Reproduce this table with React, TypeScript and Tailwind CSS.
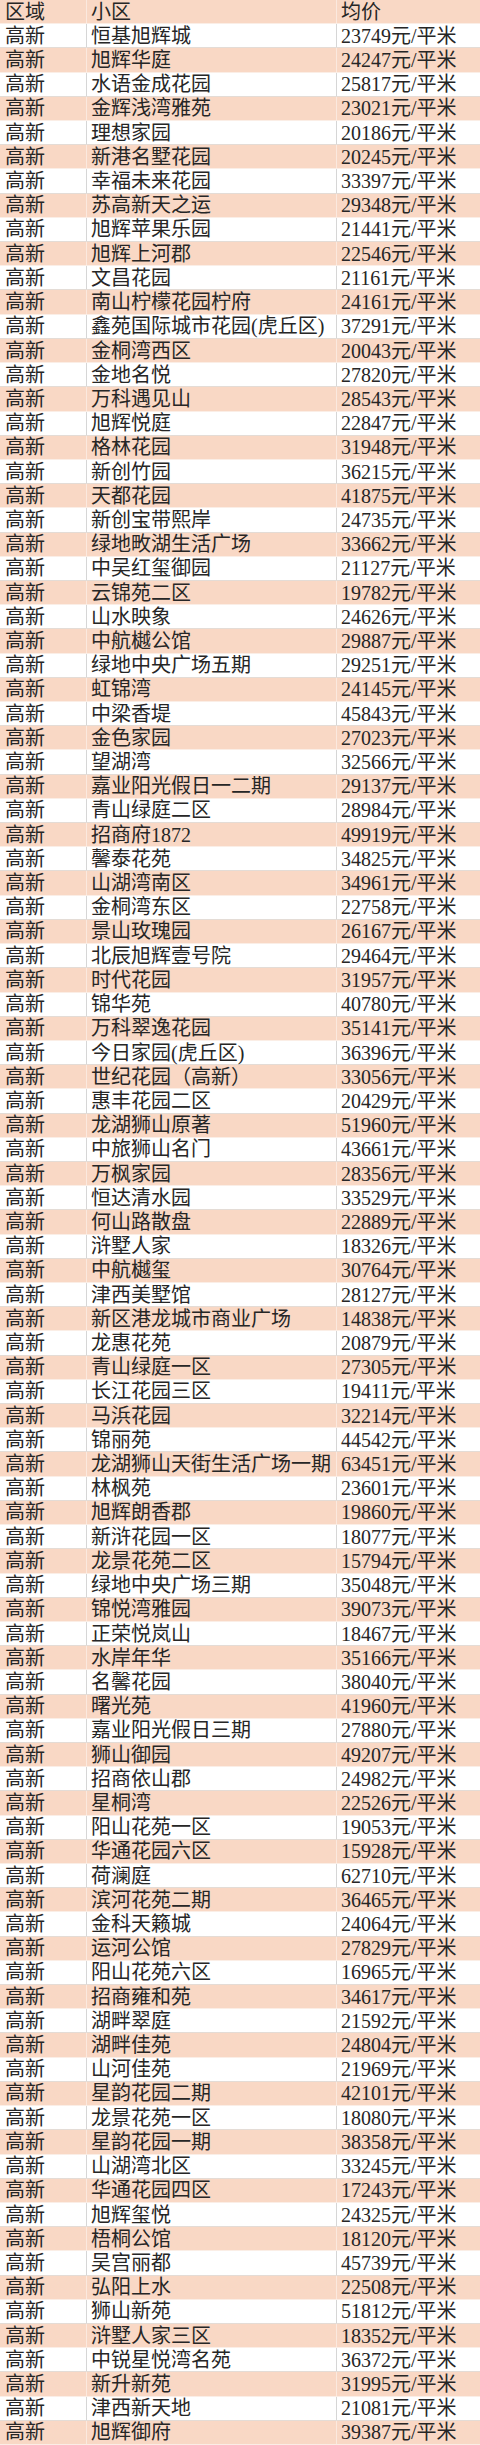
const rows: [string, string][] = [
  ['恒基旭辉城', '23749'],
  ['旭辉华庭', '24247'],
  ['水语金成花园', '25817'],
  ['金辉浅湾雅苑', '23021'],
  ['理想家园', '20186'],
  ['新港名墅花园', '20245'],
  ['幸福未来花园', '33397'],
  ['苏高新天之运', '29348'],
  ['旭辉苹果乐园', '21441'],
  ['旭辉上河郡', '22546'],
  ['文昌花园', '21161'],
  ['南山柠檬花园柠府', '24161'],
  ['鑫苑国际城市花园(虎丘区)', '37291'],
  ['金桐湾西区', '20043'],
  ['金地名悦', '27820'],
  ['万科遇见山', '28543'],
  ['旭辉悦庭', '22847'],
  ['格林花园', '31948'],
  ['新创竹园', '36215'],
  ['天都花园', '41875'],
  ['新创宝带熙岸', '24735'],
  ['绿地畋湖生活广场', '33662'],
  ['中吴红玺御园', '21127'],
  ['云锦苑二区', '19782'],
  ['山水映象', '24626'],
  ['中航樾公馆', '29887'],
  ['绿地中央广场五期', '29251'],
  ['虹锦湾', '24145'],
  ['中梁香堤', '45843'],
  ['金色家园', '27023'],
  ['望湖湾', '32566'],
  ['嘉业阳光假日一二期', '29137'],
  ['青山绿庭二区', '28984'],
  ['招商府1872', '49919'],
  ['馨泰花苑', '34825'],
  ['山湖湾南区', '34961'],
  ['金桐湾东区', '22758'],
  ['景山玫瑰园', '26167'],
  ['北辰旭辉壹号院', '29464'],
  ['时代花园', '31957'],
  ['锦华苑', '40780'],
  ['万科翠逸花园', '35141'],
  ['今日家园(虎丘区)', '36396'],
  ['世纪花园（高新）', '33056'],
  ['惠丰花园二区', '20429'],
  ['龙湖狮山原著', '51960'],
  ['中旅狮山名门', '43661'],
  ['万枫家园', '28356'],
  ['恒达清水园', '33529'],
  ['何山路散盘', '22889'],
  ['浒墅人家', '18326'],
  ['中航樾玺', '30764'],
  ['津西美墅馆', '28127'],
  ['新区港龙城市商业广场', '14838'],
  ['龙惠花苑', '20879'],
  ['青山绿庭一区', '27305'],
  ['长江花园三区', '19411'],
  ['马浜花园', '32214'],
  ['锦丽苑', '44542'],
  ['龙湖狮山天街生活广场一期', '63451'],
  ['林枫苑', '23601'],
  ['旭辉朗香郡', '19860'],
  ['新浒花园一区', '18077'],
  ['龙景花苑二区', '15794'],
  ['绿地中央广场三期', '35048'],
  ['锦悦湾雅园', '39073'],
  ['正荣悦岚山', '18467'],
  ['水岸年华', '35166'],
  ['名馨花园', '38040'],
  ['曙光苑', '41960'],
  ['嘉业阳光假日三期', '27880'],
  ['狮山御园', '49207'],
  ['招商依山郡', '24982'],
  ['星桐湾', '22526'],
  ['阳山花苑一区', '19053'],
  ['华通花园六区', '15928'],
  ['荷澜庭', '62710'],
  ['滨河花苑二期', '36465'],
  ['金科天籁城', '24064'],
  ['运河公馆', '27829'],
  ['阳山花苑六区', '16965'],
  ['招商雍和苑', '34617'],
  ['湖畔翠庭', '21592'],
  ['湖畔佳苑', '24804'],
  ['山河佳苑', '21969'],
  ['星韵花园二期', '42101'],
  ['龙景花苑一区', '18080'],
  ['星韵花园一期', '38358'],
  ['山湖湾北区', '33245'],
  ['华通花园四区', '17243'],
  ['旭辉玺悦', '24325'],
  ['梧桐公馆', '18120'],
  ['吴宫丽都', '45739'],
  ['弘阳上水', '22508'],
  ['狮山新苑', '51812'],
  ['浒墅人家三区', '18352'],
  ['中锐星悦湾名苑', '36372'],
  ['新升新苑', '31995'],
  ['津西新天地', '21081'],
  ['旭辉御府', '39387'],
];

function Row({ cells, peach }: { cells: [string, string, string]; peach: boolean }) {
  return (
    <div
      className={`grid grid-cols-[87px_250px_1fr] items-center border-b ${
        peach ? 'bg-[#f9d8c5] border-[#fbeee6]' : 'bg-white border-[#e4dcd6]'
      }`}
    >
      <div className={`h-full flex items-center pl-[5px] border-r ${peach ? 'border-[#fbe9df]' : 'border-[#d6d6d6]'}`}>
        {cells[0]}
      </div>
      <div className={`h-full flex items-center pl-[4px] whitespace-nowrap border-r ${peach ? 'border-[#fbe9df]' : 'border-[#d6d6d6]'}`}>
        {cells[1]}
      </div>
      <div className="h-full flex items-center pl-[4px] whitespace-nowrap">{cells[2]}</div>
    </div>
  );
}

export default function App() {
  return (
    <div
      className="w-[480px] h-[2445px] grid grid-rows-[repeat(101,1fr)] text-[20px] leading-none text-[#262626] bg-white overflow-hidden"
      style={{ fontFamily: '"Liberation Serif", "Noto Sans CJK SC", serif' }}
    >
      <Row cells={['区域', '小区', '均价']} peach />
      {rows.map(([name, price], i) => (
        <Row key={i} cells={['高新', name, `${price}元/平米`]} peach={i % 2 === 1} />
      ))}
    </div>
  );
}
